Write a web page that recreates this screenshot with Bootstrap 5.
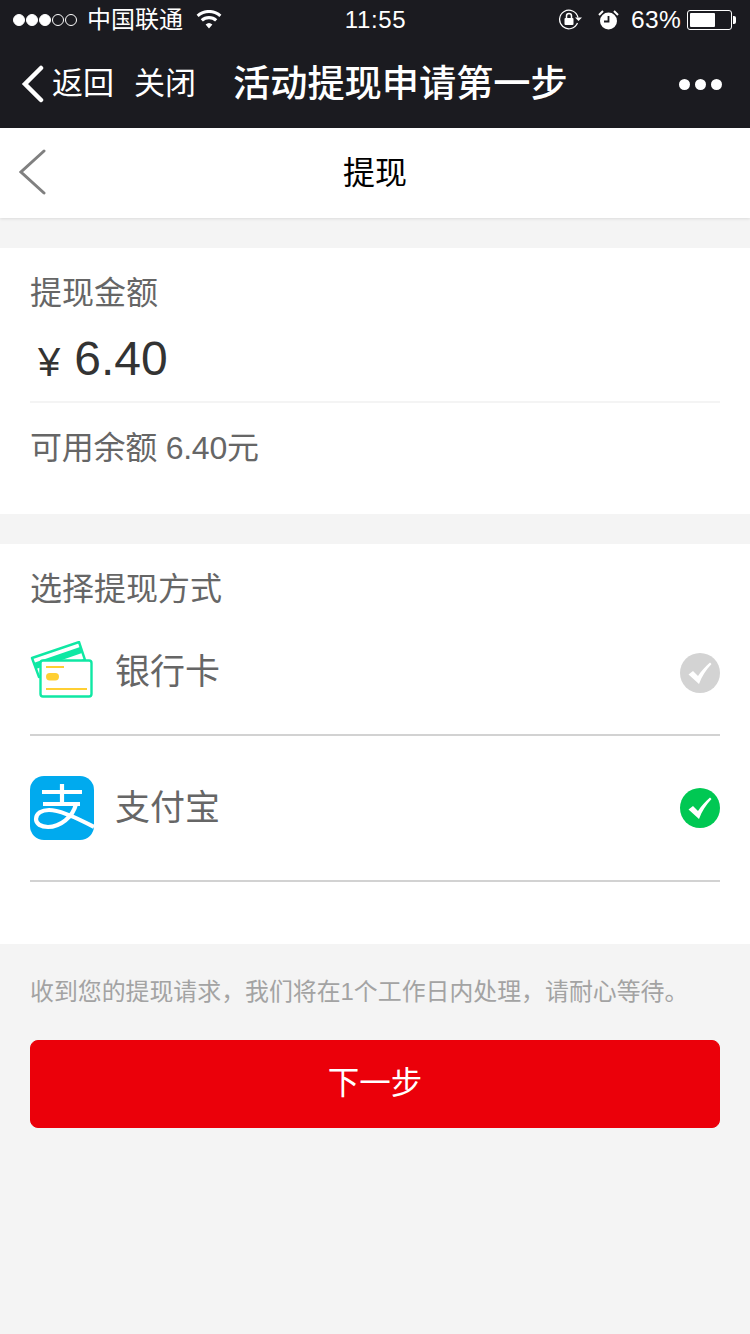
<!DOCTYPE html>
<html lang="zh-CN">
<head>
<meta charset="utf-8">
<title>提现</title>
<link href="https://cdn.jsdelivr.net/npm/bootstrap@5.3.0/dist/css/bootstrap.min.css" rel="stylesheet">
<style>
html,body{margin:0;height:100%}
body{background:#f4f4f4;font-family:"Liberation Sans","Noto Sans CJK SC",sans-serif;color:#666;width:750px;height:1334px;overflow:hidden}
.wx-top{background:#1b1b20;color:#fff;height:128px}
.wx-status{height:40px;padding:0 14px 0 13px;font-size:24px;line-height:40px}
.sig{width:12px;height:12px;border-radius:50%;border:1px solid #fff;margin-right:1px}
.sig-on{background:#fff}
.carrier{margin-left:9px;margin-right:13px;line-height:40px;font-size:24px}
.st-left{width:300px}
.st-time{font-weight:400;font-size:24px;letter-spacing:.6px;position:relative;left:1px}
.st-right{width:300px}
.pct{font-size:24.5px;margin:0 6px 0 12px;letter-spacing:.3px}
.batt{width:45px;height:20px;border:1px solid #fff;border-radius:3px;padding:2px}
.batt-fill{height:100%;width:63%;background:#fff;border-radius:1px}
.batt-tip{width:3px;height:8px;background:#fff;border-radius:0 2px 2px 0;margin-left:1px}
.wx-nav{height:88px;padding:0 28px 0 21px}
.nav-back{font-size:31px;margin-left:7px;line-height:88px;width:62px;white-space:nowrap}
.nav-close{font-size:31px;margin-left:20px;width:62px;white-space:nowrap}
.nav-title{font-size:37.2px;font-weight:500;margin-left:37px;white-space:nowrap;line-height:88px}
.dot3{width:11px;height:11px;border-radius:50%;background:#fff}
.dots{gap:5px}
.page-hd{height:90px;background:#fff;box-shadow:0 1px 3px rgba(0,0,0,.1);position:relative;color:#000;font-size:32px}
.hd-back{position:absolute;left:19px;top:21px}
.sect{background:#fff;padding:0 30px}
.amount-sec{margin-top:30px;height:266px}
.sec-label{font-size:32px;color:#666;line-height:44px;padding-top:23px}
.amount-row{height:87px;margin-top:1px;border-bottom:2px solid #f4f4f4;color:#333;line-height:1}
.yen{font-size:40px;margin-left:8px;margin-right:14px;position:relative;top:3px}
.amt{font-size:48px}
.avail{font-size:32px;line-height:44px;padding-top:23px;color:#666;letter-spacing:-.25px}
.method-sec{margin-top:30px;height:400px}
.m-row{height:146px;border-bottom:2px solid #d2d2d2}
.m-first{height:125px}
.m-list{margin-top:0}
.m-icon{width:64px;height:64px;flex:none}
.m-name{font-size:35px;margin-left:21px;color:#666}
.check{width:40px;height:40px;flex:none}
.tip{font-size:23.9px;color:#a3a3a3;padding:0 30px;line-height:34px;margin-top:31px;white-space:nowrap}
.next-wrap{padding:0 30px;margin-top:31px}
.next-btn{height:88px;background:#eb000a;border-color:#eb000a;color:#fff;font-size:31.5px;border-radius:8px;line-height:1}
.next-btn:hover{background:#eb000a;border-color:#eb000a;color:#fff}
</style>
</head>
<body>
<div class="wx-top">
  <div class="wx-status d-flex align-items-center justify-content-between">
    <div class="st-left d-flex align-items-center">
      <span class="sig sig-on"></span><span class="sig sig-on"></span><span class="sig sig-on"></span><span class="sig"></span><span class="sig"></span>
      <span class="carrier">中国联通</span>
      <svg width="26" height="20" viewBox="0 0 26 20"><path d="M13 18.5 9.6 14.6a5 5 0 0 1 6.8 0ZM6.9 11.6l-2.2-2.4a12.4 12.4 0 0 1 16.600 0l-2.200 2.400a9.200 9.200 0 0 0-12.200 0ZM2.600 6.900.6 4.700a18.500 18.500 0 0 1 24.800 0l-2 2.200a15.500 15.500 0 0 0-20.800 0Z" fill="#fff"/></svg>
    </div>
    <div class="st-time">11:55</div>
    <div class="st-right d-flex align-items-center justify-content-end">
      <svg width="24" height="22" viewBox="0 0 24 22"><path d="M20 8.500A9.300 9.300 0 1 0 19.500 14" fill="none" stroke="#fff" stroke-width="1.200"/><path d="M17 8.500h7l-3.500 3.500Z" fill="#fff"/><rect x="6.500" y="9" width="9" height="7" rx="1" fill="#fff"/><path d="M8.500 9V7a2.500 2.500 0 0 1 5 0v2" fill="none" stroke="#fff" stroke-width="1.500"/></svg>
      <svg class="ms-3" width="21" height="22" viewBox="0 0 21 22"><circle cx="10.500" cy="12" r="8.500" fill="#fff"/><path d="M10.500 7v5.500H6" fill="none" stroke="#1b1b20" stroke-width="1.800"/><path d="M1 6 5 2M20 6l-4-4" stroke="#fff" stroke-width="2"/></svg>
      <span class="pct">63%</span>
      <div class="batt"><div class="batt-fill"></div></div><div class="batt-tip"></div>
    </div>
  </div>
  <div class="wx-nav d-flex align-items-center justify-content-between">
    <div class="d-flex align-items-center">
      <svg width="24" height="38" viewBox="0 0 24 38"><path d="M20 3 4 19l16 16" fill="none" stroke="#fff" stroke-width="4.500" stroke-linecap="round" stroke-linejoin="miter"/></svg>
      <span class="nav-back">返回</span>
      <span class="nav-close">关闭</span>
      <span class="nav-title">活动提现申请第一步</span>
    </div>
    <div class="dots d-flex"><span class="dot3"></span><span class="dot3"></span><span class="dot3"></span></div>
  </div>
</div>
<div class="page-hd d-flex align-items-center justify-content-center">
  <svg class="hd-back" width="27" height="46" viewBox="0 0 27 46"><path d="M25 2 2 23l23 21" fill="none" stroke="#808080" stroke-width="3" stroke-linecap="round"/></svg>
  <span>提现</span>
</div>
<section class="sect amount-sec">
  <div class="sec-label">提现金额</div>
  <div class="amount-row d-flex align-items-center"><span class="yen">¥</span><span class="amt">6.40</span></div>
  <div class="avail">可用余额 6.40元</div>
</section>
<section class="sect method-sec">
  <div class="sec-label">选择提现方式</div>
  <div class="m-list">
    <div class="m-row m-first d-flex align-items-center justify-content-between">
      <div class="d-flex align-items-center">
        <svg class="m-icon" viewBox="0 0 64 64"><g fill="#fff" stroke="#0fe8a4" stroke-width="2.400" stroke-linejoin="round"><path d="M2 17 49 1l6 18L9 36Z"/></g><path d="M3.500 22 50 6l2 6L6 28Z" fill="#0fe8a4"/><rect x="10.500" y="19.500" width="51" height="36" rx="2.500" fill="#fff" stroke="#0fe8a4" stroke-width="2.400"/><rect x="16" y="25" width="18" height="2" fill="#ffcf33"/><rect x="16" y="32" width="13" height="7.500" rx="3.700" fill="#ffcf33"/><rect x="16" y="47" width="41" height="2" fill="#ffcf33"/></svg>
        <span class="m-name">银行卡</span>
      </div>
      <svg class="check" viewBox="0 0 40 40"><circle cx="20" cy="20" r="20" fill="#d3d3d3"/><path d="M8.500 21.500 13 18l5 5c3.500-5.500 7-9 12-13.500l1.500 1.500C26 17 22 23 19 31Z" fill="#fff"/></svg>
    </div>
    <div class="m-row d-flex align-items-center justify-content-between">
      <div class="d-flex align-items-center">
        <svg class="m-icon" viewBox="0 0 64 64"><path d="M14 0h36a14 14 0 0 1 14 14v36a14 14 0 0 1-14 14H14A14 14 0 0 1 0 50V14A14 14 0 0 1 14 0Z" fill="#00aaee"/><path d="M12 16h40M32 8v20M13 28h37M46 28c-3 13-16 23-28 23-7 0-12-3-12-8 0-6 6-9 13-9 12 0 30 9 45 17" fill="none" stroke="#fff" stroke-width="4.200"/></svg>
        <span class="m-name">支付宝</span>
      </div>
      <svg class="check" viewBox="0 0 40 40"><circle cx="20" cy="20" r="20" fill="#00c853"/><path d="M8.500 21.500 13 18l5 5c3.500-5.500 7-9 12-13.500l1.500 1.500C26 17 22 23 19 31Z" fill="#fff"/></svg>
    </div>
  </div>
</section>
<p class="tip mb-0">收到您的提现请求，我们将在1个工作日内处理，请耐心等待。</p>
<div class="next-wrap"><button class="btn next-btn w-100" type="button">下一步</button></div>
<script src="https://cdn.jsdelivr.net/npm/bootstrap@5.3.0/dist/js/bootstrap.bundle.min.js"></script>
</body>
</html>
